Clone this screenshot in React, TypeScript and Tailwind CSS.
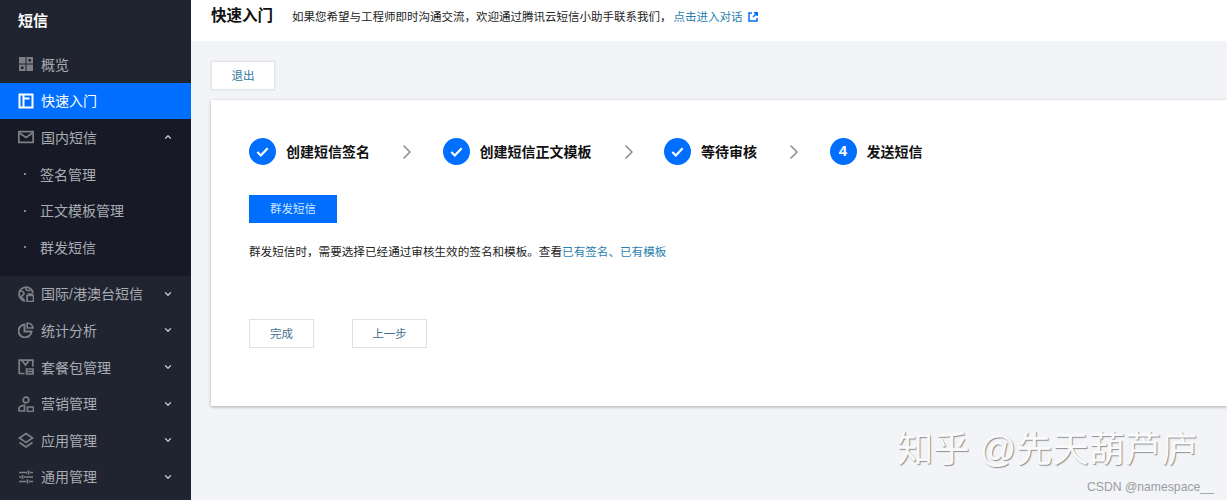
import { ChevronDown, ChevronRight, ChevronUp } from 'lucide-react';
import type { ReactNode } from 'react';

const FONT = "font-['Liberation_Sans','Noto_Sans_CJK_SC',sans-serif]";

function Svg({ children }: { children: ReactNode }) {
  return (
    <svg width="16" height="16" viewBox="0 0 16 16" fill="none" stroke="currentColor" strokeWidth="1.7">
      {children}
    </svg>
  );
}

const icons: Record<string, ReactNode> = {
  overview: (
    <Svg>
      <path d="M1 1h6.500v6.500H1zM8.500 1H15v6.500H8.500zM1 8.500h6.500V15H1zM8.500 8.500H15V15H8.500z" fill="currentColor" stroke="none" />
      <path d="M3 10.500h2.500V13H3zM10.500 3H13v2.500h-2.500z" fill="#1f2430" stroke="none" />
    </Svg>
  ),
  quick: (
    <Svg>
      <path d="M1.500 1.500h13v13h-13z" strokeWidth="2" />
      <path d="M5.500 2v12M5.500 5.500h6" strokeWidth="2" />
    </Svg>
  ),
  mail: (
    <Svg>
      <path d="M.8 2.700h14.400v10.600H.8z" strokeWidth="1.800" />
      <path d="M1.500 4l6.500 4.500L14.500 4" strokeWidth="1.800" />
    </Svg>
  ),
  globe: (
    <Svg>
      <path d="M7 15A7 7 0 1 1 15 7" strokeWidth="1.900" />
      <path d="M1.500 5c2.500 0 4.500.5 4.500 2.500S3 9 3.500 11s2.500 1 2.500 3.500M8 1.500c-.5 2 .5 3 2 3h2.500" />
      <path d="M9 9.500h6.500v6H9zM10.500 9.500V8h3.500v1.500" />
    </Svg>
  ),
  chart: (
    <Svg>
      <path d="M6.500 2.500a6.500 6.500 0 1 0 7 7h-7z" strokeWidth="2" />
      <path d="M9.200 1v5h5.800A6 6 0 0 0 9.200 1z" />
    </Svg>
  ),
  pack: (
    <Svg>
      <path d="M6.500 14.500H1.200V1.200h13.600v6.300" />
      <path d="M4 1.500l3.500 4.500L11 1.500" />
      <path d="M8.500 10h6.500v5H8.500zM8.500 12.500h6.500" />
    </Svg>
  ),
  market: (
    <Svg>
      <circle cx="8" cy="4" r="2.800" />
      <path d="M1 15.200v-2.700c0-2 2.500-3 5.500-3.200V15H1" />
      <path d="M9.500 11h6v4.500h-6z" />
    </Svg>
  ),
  app: (
    <Svg>
      <path d="M8 1.500L14.500 6 8 10.500 1.500 6z" />
      <path d="M1.500 10.500L8 15l6.500-4.500" />
    </Svg>
  ),
  common: (
    <Svg>
      <path d="M1 3.500h8M12 3.500h3M1 8h2M6 8h9M1 12.500h7M11 12.500h4" />
      <path d="M10.500 1.500v4M4.500 6v4M9.500 10.500v4" />
    </Svg>
  ),
};

function NavItem({ icon, label, active, open }: { icon: string; label: string; active?: boolean; open?: boolean }) {
  return (
    <div
      className={`flex h-[36.6px] items-center pl-[18px] pr-[18px] text-[14px] ${
        active ? 'bg-[#006eff] text-white' : 'text-[#a9acb3]'
      }`}
    >
      <span className={`mr-[7px] ${active ? 'text-white' : 'text-[#7c7f86]'}`}>{icons[icon]}</span>
      <span className="flex-1 pt-[2px]">{label}</span>
      {open === true && <ChevronUp size={10} strokeWidth={3} className="text-[#c4c6ca]" />}
      {open === false && <ChevronDown size={10} strokeWidth={3} className="text-[#c4c6ca]" />}
    </div>
  );
}

function SubItem({ label }: { label: string }) {
  return (
    <div className="flex h-[36.6px] items-center pl-[24px] text-[14px] text-[#a9acb3]">
      <span className="mr-[14px] h-[2px] w-[2px] rounded-full bg-[#a9acb3]" />
      <span className="pt-[2px]">{label}</span>
    </div>
  );
}

function Step({ label, num, last }: { label: string; num?: string; last?: boolean }) {
  return (
    <>
      <div className="flex items-center gap-[10px]">
        <div className="flex h-[27px] w-[27px] items-center justify-center rounded-full bg-[#006eff] text-[15px] font-bold text-white">
          {num ?? (
            <svg width="15" height="15" viewBox="0 0 16 16" fill="none" stroke="white" strokeWidth="2.4">
              <path d="M2.500 8.500l3.700 3.700 7.300-7.700" />
            </svg>
          )}
        </div>
        <span className="pt-[2px] text-[14px] font-bold text-[#111]">{label}</span>
      </div>
      {!last && <ChevronRight size={24} strokeWidth={1.600} className="ml-[25.250px] mr-[23.250px] text-[#8a8d93]" />}
    </>
  );
}

export default function App() {
  return (
    <div className={`relative flex h-[500px] w-[1227px] overflow-hidden bg-[#f2f4f8] ${FONT}`}>
      <aside className="w-[191px] shrink-0 bg-[#1f2430]">
        <div className="flex h-[46px] items-start pl-[18px] pt-[10px] text-[15px] font-bold text-white">短信</div>
        <NavItem icon="overview" label="概览" />
        <NavItem icon="quick" label="快速入门" active />
        <div className="bg-[#171a26] pb-[10px]">
          <NavItem icon="mail" label="国内短信" open />
          <SubItem label="签名管理" />
          <SubItem label="正文模板管理" />
          <SubItem label="群发短信" />
        </div>
        <NavItem icon="globe" label="国际/港澳台短信" open={false} />
        <NavItem icon="chart" label="统计分析" open={false} />
        <NavItem icon="pack" label="套餐包管理" open={false} />
        <NavItem icon="market" label="营销管理" open={false} />
        <NavItem icon="app" label="应用管理" open={false} />
        <NavItem icon="common" label="通用管理" open={false} />
      </aside>

      <main className="min-w-0 flex-1">
        <header className="flex h-[41px] items-start bg-white pl-5 pt-[5px]">
          <h1 className="text-[15.500px] font-bold leading-[22px] text-[#111]">快速入门</h1>
          <p className="ml-[19px] flex items-center text-[11.500px] leading-[24px] text-[#222]">
            如果您希望与工程师即时沟通交流，欢迎通过腾讯云短信小助手联系我们，
            <a className="ml-[2px] text-[#2a7fb0]">点击进入对话</a>
            <svg className="ml-[5px]" width="10" height="10" viewBox="0 0 10 10" fill="none" stroke="#006eff" strokeWidth="1.500">
              <path d="M4 1H1v8h8V6M5 5l4-4M6 .8h3.200V4" />
            </svg>
          </p>
        </header>

        <div className="px-5 pt-5">
          <button className="h-[29px] w-[64px] border border-[#e2e4e8] bg-white pt-[2px] text-[11.500px] text-[#31759b] shadow-[0_0_2px_rgba(0,0,0,0.08)]">
            退出
          </button>

          <section className="mr-[-20px] mt-[10px] h-[306px] bg-white pl-[38px] pt-[38px] shadow-[0_1px_3px_rgba(0,0,0,0.3)]">
            <div className="flex h-[27px] items-center">
              <Step label="创建短信签名" />
              <Step label="创建短信正文模板" />
              <Step label="等待审核" />
              <Step label="发送短信" num="4" last />
            </div>

            <button className="mt-[30px] block h-[28px] w-[88px] bg-[#006eff] pt-[2px] text-[11.500px] text-[#d5e6ff]">群发短信</button>

            <p className="mt-[20px] text-[11.600px] leading-[18px] text-[#222]">
              群发短信时，需要选择已经通过审核生效的签名和模板。查看
              <a className="text-[#2a7fb0]">已有签名、已有模板</a>
            </p>

            <div className="mt-[58px] flex gap-[38px]">
              <button className="h-[29px] w-[65px] border border-[#dfe1e5] bg-white pt-[2px] text-[11.500px] text-[#3f6f8c]">完成</button>
              <button className="h-[29px] w-[75px] border border-[#dfe1e5] bg-white pt-[2px] text-[11.500px] text-[#3f6f8c]">上一步</button>
            </div>
          </section>
        </div>
      </main>

      <div className="absolute left-[897px] top-[430px] text-[36.250px] leading-[40px] text-[#f9fafb] [text-shadow:1px_1px_1px_#8f8f8f]">
        知乎 @先天葫芦庐
      </div>
      <div className="absolute left-[1087px] top-[479px] text-[12.200px] leading-[16px] text-[#9a9ca0]">CSDN @namespace__</div>
    </div>
  );
}
